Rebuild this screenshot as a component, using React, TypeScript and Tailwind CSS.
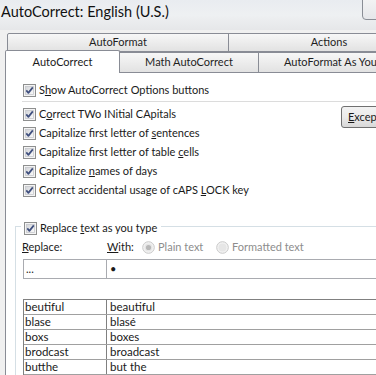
import React from "react";

const Check = () => (
  <svg width="13" height="13" viewBox="0 0 13 13" className="shrink-0">
    <defs>
      <linearGradient id="cbg" x1="0" y1="0" x2="1" y2="1">
        <stop offset="0" stopColor="#d2d4d8" />
        <stop offset="1" stopColor="#fbfbfb" />
      </linearGradient>
    </defs>
    <rect x="0.5" y="0.5" width="12" height="12" fill="#f4f4f4" stroke="#8e8f8f" />
    <rect x="2.5" y="2.5" width="8" height="8" fill="url(#cbg)" stroke="#c6c8cc" strokeWidth="0.8" />
    <path d="M3.3 6.4 L5.4 8.9 L9.8 3.4" fill="none" stroke="#3f4f7e" strokeWidth="1.7" strokeLinejoin="round" />
  </svg>
);

const Radio = ({ on }: { on?: boolean }) => (
  <svg width="13" height="13" viewBox="0 0 13 13" className="shrink-0">
    <circle cx="6.5" cy="6.5" r="5.8" fill="#f3f3f3" stroke="#c8c8c8" />
    <circle cx="6.5" cy="6.5" r="4" fill="#e6e6e6" />
    {on && <circle cx="6.5" cy="6.5" r="2.6" fill="#b8b8b8" />}
  </svg>
);

const Row = ({ children }: { children: React.ReactNode }) => (
  <div className="flex items-center h-[19px] gap-[3px] whitespace-nowrap">
    <Check />
    <span>{children}</span>
  </div>
);

const tabBase =
  "flex items-center shrink-0 whitespace-nowrap overflow-hidden border border-[#898c95] bg-gradient-to-b from-[#f7f7f7] to-[#e2e2e2] text-[#1e1e1e]";

const rows: [string, string][] = [
  ["beutiful", "beautiful"],
  ["blase", "blasé"],
  ["boxs", "boxes"],
  ["brodcast", "broadcast"],
  ["butthe", "but the"],
];

export default function App() {
  return (
    <div
      className="relative w-[376px] h-[375px] overflow-hidden bg-[#f0f0f0] text-[11px] text-[#1a1a1a]"
      style={{ fontFamily: 'Lato, "Noto Sans", sans-serif' }}
    >
      {/* title bar */}
      <div className="h-[30px] flex items-start bg-gradient-to-b from-[#e9ecf0] via-[#eef0f2] to-[#e6e7e9]">
        <span className="text-[14.5px] leading-[24px] pl-[1px] text-[#111]">AutoCorrect: English (U.S.)</span>
      </div>
      <div className="absolute left-[362px] top-[-6px] w-[30px] h-[26px] rounded-[4px] border border-[#8a8e96] bg-gradient-to-b from-[#f6f6f6] to-[#e6e7ea]" />

      <div className="pl-[5px]">
        {/* tab row 1 */}
        <div className="flex mt-[3px] ml-[2px]">
          <div className={tabBase + " justify-center w-[222px] h-[19px] rounded-tl-[2px]"}>AutoFormat</div>
          <div className={tabBase + " justify-center w-[202px] h-[19px] -ml-px"}>Actions</div>
        </div>
        {/* tab row 2 */}
        <div className="flex items-start -mt-[2px] h-[23px]">
          <div className="relative z-10 shrink-0 flex items-center justify-center w-[115px] h-[23px] border border-b-0 border-[#898c95] bg-white rounded-t-[2px]">
            AutoCorrect
          </div>
          <div className={tabBase + " justify-center w-[140px] h-[20px] mt-[2px] -ml-px border-b-0"}>Math AutoCorrect</div>
          <div className={tabBase + " justify-start w-[150px] h-[20px] mt-[2px] -ml-px border-b-0 pl-[25px]"}>
            AutoFormat As You Type
          </div>
        </div>
        {/* panel */}
        <div className="-mt-px h-[330px] bg-white border-l border-t border-[#898c95] pl-[17px] pt-[8px]">
          <Row>
            S<u>h</u>ow AutoCorrect Options buttons
          </Row>
          <div className="mt-[1px] -ml-[1px] h-px bg-[#dcdcdc]" />
          <div className="flex items-start mt-[3px]">
            <div className="w-[318px] shrink-0">
              <Row>
                C<u>o</u>rrect TWo INitial CApitals
              </Row>
              <Row>
                Capitalize first letter of <u>s</u>entences
              </Row>
              <Row>
                Capitalize first letter of table <u>c</u>ells
              </Row>
              <Row>
                Capitalize <u>n</u>ames of days
              </Row>
              <Row>
                Correct accidental usage of cAPS <u>L</u>OCK key
              </Row>
            </div>
            <div className="mt-[1px] shrink-0 w-[90px] h-[22px] rounded-[3px] border border-[#707070] bg-gradient-to-b from-[#f2f2f2] via-[#ebebeb] to-[#d8d8d8] flex items-center pl-[6px] whitespace-nowrap">
              <u>E</u>xceptions...
            </div>
          </div>

          {/* group box */}
          <div className="mt-[26px] -ml-[8px] border-t border-l border-[#d5dfe5] h-[200px]">
            <div className="-mt-[8px] ml-[5px] pl-[3px] pr-[4px] bg-white w-fit">
              <Row>
                Replace <u>t</u>ext as you type
              </Row>
            </div>
            <div className="flex items-center h-[19px] pl-[6px] whitespace-nowrap">
              <span className="w-[85px] shrink-0">
                <u>R</u>eplace:
              </span>
              <span className="w-[35px] shrink-0">
                <u>W</u>ith:
              </span>
              <Radio on />
              <span className="ml-[3px] w-[58px] text-[#8d8d8d]">Plain text</span>
              <Radio />
              <span className="ml-[3px] text-[#8d8d8d]">Formatted text</span>
            </div>
            <div className="flex mt-[2px] ml-[7px] h-[20px]">
              <div className="w-[84px] shrink-0 border border-[#a9abb0] pl-[2px] leading-[18px]">...</div>
              <div className="w-[300px] shrink-0 -ml-px border border-[#a9abb0] pl-[3px] leading-[18px]">•</div>
            </div>
            <div className="mt-[20px] ml-[7px] w-[400px] border-t border-l border-[#808080] text-[11.5px]">
              {rows.map(([a, b]) => (
                <div key={a} className="flex h-[15px] border-b border-[#a0a0a0] leading-[14px]">
                  <div className="w-[83px] shrink-0 border-r border-[#808080] pl-[1px]">{a}</div>
                  <div className="pl-[3px]">{b}</div>
                </div>
              ))}
            </div>
          </div>
        </div>
      </div>
    </div>
  );
}
